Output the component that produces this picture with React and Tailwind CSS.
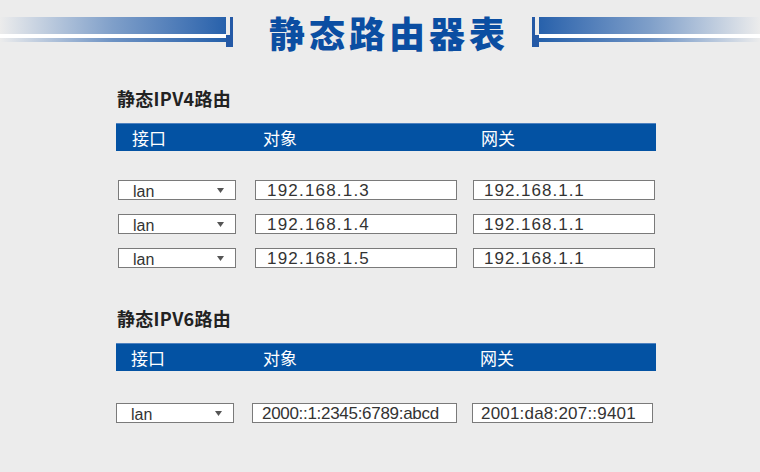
const CJK = { fontFamily: '"Noto Sans CJK SC", "Noto Sans", sans-serif' };
const LATIN = { fontFamily: '"Liberation Sans", Arial, sans-serif' };

const ipv4Rows = [
  { target: "192.168.1.3", gateway: "192.168.1.1" },
  { target: "192.168.1.4", gateway: "192.168.1.1" },
  { target: "192.168.1.5", gateway: "192.168.1.1" },
];

function Decor({ side, w }) {
  const left = side === "left";
  const bars = (
    <div className="flex flex-col flex-1">
      <div
        className={`h-[17px] ${left ? "bg-gradient-to-r" : "bg-gradient-to-l"} from-[#ececec] via-[#7f9fc9] to-[#2761ab]`}
      />
      <div className="h-[4px] bg-white" />
      <div
        className={`h-[4px] ${left ? "bg-gradient-to-r" : "bg-gradient-to-l"} from-[#ececec] via-[#6d92c3] to-[#2460aa]`}
      />
      <div className="h-[5px]" />
    </div>
  );
  const tick = (
    <div className={`flex flex-col w-[7px] ${left ? "items-end" : "items-start"}`}>
      <div className="w-[3px] h-[18px] bg-[#2459a6]" />
      <div className="w-[7px] h-[12px] bg-[#2459a6]" />
    </div>
  );
  return (
    <div className={`flex items-stretch h-[30px] ${w}`}>
      {left ? bars : tick}
      {left ? tick : bars}
    </div>
  );
}

function Select({ value }) {
  return (
    <div
      className="w-[118px] h-[20px] bg-white border border-[#7a7a7a] flex items-center justify-between pl-[14px] pr-[11px] text-[16px] text-[#333]"
      style={LATIN}
    >
      <span className="leading-none pt-[3px]">{value}</span>
      <svg width="7" height="5" viewBox="0 0 7 5" className="mt-[1px]">
        <path d="M0 0 H7 L3.5 5 Z" fill="#555" />
      </svg>
    </div>
  );
}

function Field({ value, w, pl, tracking }) {
  return (
    <div
      className={`${w} h-[20px] bg-white border border-[#7a7a7a] flex items-center ${pl} text-[17px] text-[#333] ${tracking}`}
      style={LATIN}
    >
      <span className="leading-none whitespace-nowrap">{value}</span>
    </div>
  );
}

function HeaderBar({ xs }) {
  return (
    <div
      className="w-[540px] h-[28px] bg-[#0352a3] border-t border-[#4f82c0] flex items-center text-white text-[17px]"
      style={CJK}
    >
      <span className={xs[0]}>接口</span>
      <span className={xs[1]}>对象</span>
      <span className={xs[2]}>网关</span>
    </div>
  );
}

export default function App() {
  return (
    <div className="w-[760px] h-[472px] bg-[#ececec] overflow-hidden">
      {/* title banner */}
      <div className="flex items-center h-[48px] mt-[8px]">
        <Decor side="left" w="w-[233px]" />
        <h1
          className="w-[299px] shrink-0 pl-[13px] text-center text-[36px] leading-[48px] font-black tracking-[4px] text-[#0b4ea2]"
          style={CJK}
        >
          静态路由器表
        </h1>
        <Decor side="right" w="flex-1" />
      </div>

      <div className="ml-[116px] flex flex-col">
        <h2 className="mt-[30px] ml-[1px] text-[18px] leading-[24px] font-bold tracking-[0.3px] text-[#222]" style={CJK}>
          静态IPV4路由
        </h2>
        <div className="mt-[13px]">
          <HeaderBar xs={["ml-[16px]", "ml-[97px]", "ml-[184px]"]} />
        </div>
        <div className="mt-[29px] ml-[2px] flex flex-col gap-[14px]">
          {ipv4Rows.map((r, i) => (
            <div key={i} className="flex items-center">
              <Select value="lan" />
              <div className="ml-[19px]">
                <Field value={r.target} w="w-[202px]" pl="pl-[11px]" tracking="tracking-[1.2px]" />
              </div>
              <div className="ml-[16px]">
                <Field value={r.gateway} w="w-[182px]" pl="pl-[10px]" tracking="tracking-[1px]" />
              </div>
            </div>
          ))}
        </div>

        <h2 className="mt-[38px] ml-[1px] text-[18px] leading-[24px] font-bold tracking-[0.3px] text-[#222]" style={CJK}>
          静态IPV6路由
        </h2>
        <div className="mt-[13px]">
          <HeaderBar xs={["ml-[15px]", "ml-[98px]", "ml-[183px]"]} />
        </div>
        <div className="mt-[32px] flex items-center">
          <Select value="lan" />
          <div className="ml-[18px]">
            <Field value="2000::1:2345:6789:abcd" w="w-[205px]" pl="pl-[9px]" tracking="tracking-[-0.3px]" />
          </div>
          <div className="ml-[15px]">
            <Field value="2001:da8:207::9401" w="w-[181px]" pl="pl-[8px]" tracking="tracking-[0.2px]" />
          </div>
        </div>
      </div>
    </div>
  );
}
